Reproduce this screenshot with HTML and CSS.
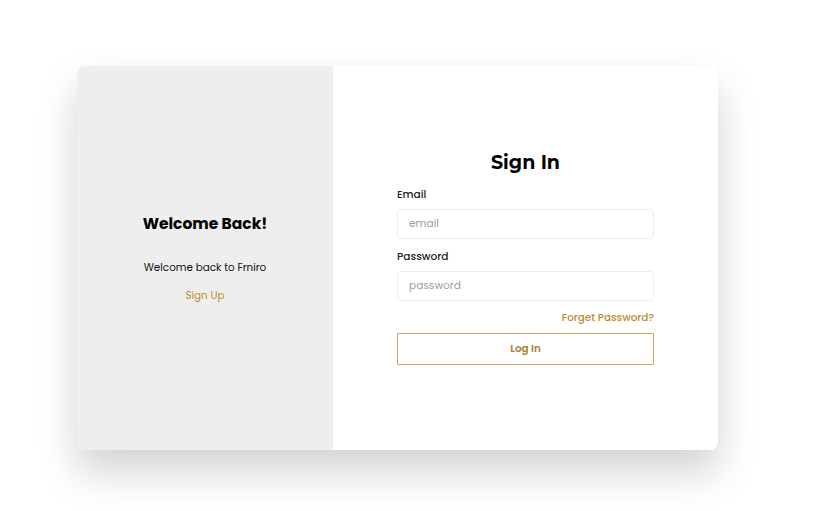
FILE: index.html
```html
<!DOCTYPE html>
<html lang="en">
<head>
    <meta charset="UTF-8">
    <meta name="viewport" content="width=device-width, initial-scale=1.0">
    <title>Frniro - Sign In</title>
    <link rel="stylesheet" href="styles.css">
</head>
<body>
    <div class="card">
        <!-- Left panel -->
        <div class="side">
            <h2>Welcome Back!</h2>
            <p class="side-text">Welcome back to Frniro</p>
            <a href="#" class="side-link">Sign Up</a>
        </div>

        <!-- Sign in form -->
        <div class="main">
            <form class="form">
                <h1>Sign In</h1>
                <label for="email">Email</label>
                <input type="email" id="email" placeholder="email">
                <label for="password" class="second">Password</label>
                <input type="password" id="password" placeholder="password">
                <a href="#" class="forget">Forget Password?</a>
                <button type="button">Log In</button>
            </form>
        </div>
    </div>
</body>
</html>
```

FILE: styles.css
```css
html, body {
    height: 100%;
}
body {
    margin: 0;
    box-sizing: border-box;
    padding: 66px 0 0 77px;
    background: #ffffff;
    font-family: "Poppins", Inter, "Open Sans", sans-serif;
    color: #111;
}
.card {
    width: 641px;
    height: 384px;
    display: flex;
    border-radius: 8px;
    overflow: hidden;
    background: #fff;
    box-shadow: 0 22px 40px rgba(0, 0, 0, 0.18);
}
.side {
    width: 256px;
    background: #eeeeee;
    display: flex;
    flex-direction: column;
    align-items: center;
    justify-content: center;
}
.side h2 {
    margin: 0;
    font-size: 15.5px;
    line-height: 24px;
    font-weight: 700;
    color: #000;
}
.side-text {
    margin: 23px 0 0;
    font-size: 10.4px;
    line-height: 18px;
    color: #111;
}
.side-link {
    margin-top: 10px;
    font-size: 10.4px;
    line-height: 18px;
    color: #b88e2f;
    text-decoration: none;
}
.main {
    flex: 1;
    display: flex;
    align-items: center;
    padding: 0 64px;
}
.form {
    width: 100%;
    display: flex;
    flex-direction: column;
    margin-top: -4px;
}
.form h1 {
    margin: 0 0 8px;
    text-align: center;
    font-family: "Montserrat", "Poppins", sans-serif;
    font-size: 19px;
    line-height: 30px;
    font-weight: 700;
    color: #000;
}
.form label {
    font-size: 10.6px;
    line-height: 18px;
    font-weight: 500;
    color: #222;
}
.form label.second {
    margin-top: 9px;
}
.form input {
    margin-top: 5px;
    height: 30px;
    box-sizing: border-box;
    padding: 0 11px;
    border: 1px solid #ececec;
    border-radius: 4px;
    font-family: inherit;
    font-size: 10.6px;
    outline: none;
}
.form input::placeholder {
    color: #9c9c9c;
}
.forget {
    margin-top: 8px;
    align-self: flex-end;
    font-size: 10.4px;
    line-height: 18px;
    font-weight: 500;
    color: #b88e2f;
    text-decoration: none;
}
.form button {
    margin-top: 6px;
    height: 32px;
    background: #fff;
    border: 1px solid #c9a45a;
    border-radius: 1px;
    font-family: inherit;
    font-size: 10.4px;
    font-weight: 600;
    color: #a8802f;
}
```
